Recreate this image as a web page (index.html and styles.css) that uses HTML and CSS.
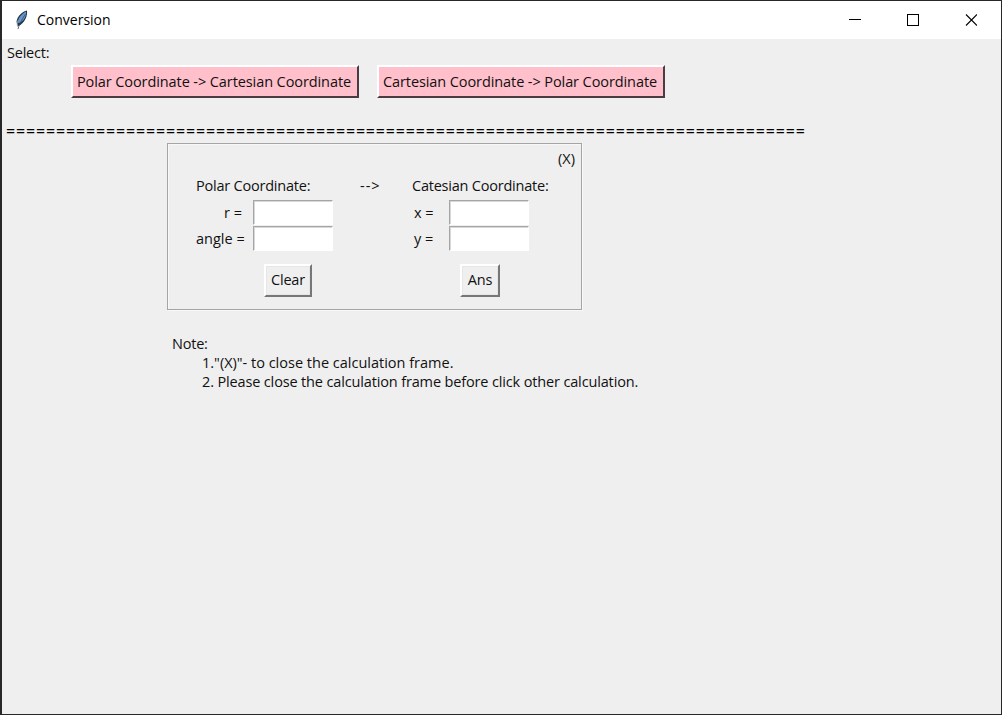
FILE: index.html
```html
<!DOCTYPE html>
<html lang="en">
<head>
<meta charset="utf-8">
<title>Conversion</title>
<link rel="stylesheet" href="styles.css">
</head>
<body>
<div class="window">
  <header class="titlebar">
    <svg class="feather" width="14" height="20" viewBox="0 0 14 20">
      <path d="M12 .5C7.500 1.500 2.500 6 1.500 11.500L2.500 16.500 6 14.500C10.500 11 12.500 5.500 12 .5Z" fill="#28323d"/>
      <path d="M11 1.500C6.500 4 3 8 2.500 13L5.500 12.500C9.500 9.500 11.500 6 11 1.500Z" fill="#6298d0"/>
      <path d="M10.500 4C8 8 5 12 3 19" fill="none" stroke="#34475d" stroke-width=".8"/>
      <path d="M2 10.500L2.300 16" fill="none" stroke="#b9c8d4" stroke-width=".8"/>
    </svg>
    <h1 class="title">Conversion</h1>
    <svg class="controls" width="128" height="14" viewBox="0 0 128 14" fill="none" stroke="#000">
      <path d="M0 6.500H12M58.500 1.500H69.500V12.500H58.500Z" shape-rendering="crispEdges"/>
      <path d="M117 1.500L128 12.500M128 1.500L117 12.500" stroke-width="1.100"/>
    </svg>
  </header>
  <main class="client">
    <div class="select">Select:</div>
    <div class="modes">
      <button class="button pink">Polar Coordinate -&gt; Cartesian Coordinate</button>
      <button class="button pink">Cartesian Coordinate -&gt; Polar Coordinate</button>
    </div>
    <div class="separator">================================================================================</div>
    <section class="frame">
      <div class="close">(X)</div>
      <div class="headings">
        <span class="from">Polar Coordinate:</span>
        <span class="arrow">--&gt;</span>
        <span class="to">Catesian Coordinate:</span>
      </div>
      <div class="fields">
        <label class="label-r" for="r">r =</label><input class="entry" id="r">
        <label class="label-xy" for="x">x =</label><input class="entry" id="x">
        <label class="label-angle" for="angle">angle =</label><input class="entry" id="angle">
        <label class="label-xy" for="y">y =</label><input class="entry" id="y">
      </div>
      <div class="actions">
        <button class="button clear">Clear</button>
        <button class="button ans">Ans</button>
      </div>
    </section>
    <div class="note">
      <div class="note-title">Note:</div>
      <div class="note-one">1."(X)"- to close the calculation frame.</div>
      <div class="note-two">2. Please close the calculation frame before click other calculation.</div>
    </div>
  </main>
</div>
</body>
</html>
```
FILE: styles.css
```css
* { box-sizing: border-box; }
body { margin: 0; font: 14.5px/19px "Open Sans", "Noto Sans", sans-serif; color: #111; white-space: nowrap; letter-spacing: -0.22px; }
.window { width: 1002px; height: 715px; border: 1px solid #28282a; border-left-width: 2px; background: #efefef; overflow: hidden; }
.titlebar { display: flex; align-items: center; height: 38px; padding-left: 13px; background: #fff; }
.title { margin: -2px 0 0 8px; font-size: 14px; font-weight: 400; color: #000; letter-spacing: 0; }
.controls { margin-left: auto; margin-right: 24px; }
.client { display: flex; flex-direction: column; align-items: flex-start; padding-top: 4px; }
.select { padding-left: 5px; }
.modes { display: flex; gap: 18px; margin: 3px 0 0 69px; }
.button { height: 33px; padding: 0 0 2px; border: 2px solid; border-color: #fff #777 #777 #fff; background: #efefef; color: #111; font: inherit; letter-spacing: inherit; text-align: center; box-shadow: inset 1px 1px #e6e6e6, inset -1px -1px #e6e6e6; }
.pink { width: 288px; padding: 0 2px 1px 0; background: #ffc0cb; border-color: #fff #493d43 #493d43 #fff; box-shadow: none; letter-spacing: -0.090px; }
.separator { margin: 24px 0 0 4px; font-size: 16px; letter-spacing: 0.848px; color: #000; }
.frame { width: 415px; height: 167px; margin: 2px 0 0 165px; border: 1px solid #a5a5a5; box-shadow: inset 1px 1px #f8f8f8, 1px 1px #f8f8f8; }
.close { height: 19px; margin: 5px 6px 0 0; text-align: right; letter-spacing: 0; }
.headings { display: grid; grid-template-columns: 164px 52px 1fr; height: 19px; margin: 8px 0 0 28px; }
.arrow { letter-spacing: 1px; }
.fields { display: grid; grid-template-columns: 85px 161px 35px 81px; row-gap: 1px; margin-top: 5px; align-items: center; letter-spacing: 0; }
.entry { width: 80px; height: 25px; padding: 0 2px; border: 1px solid; border-color: #a5a5a5 #fff #fff #a5a5a5; background: #fff; outline: 0; font: inherit; box-shadow: inset 1px 1px #d8d8d8; }
.label-r { padding-left: 56px; }
.label-angle { padding-left: 28px; }
.actions { display: flex; gap: 148px; margin: 13px 0 0 96px; }
.clear { width: 48px; }
.ans { width: 40px; }
.note { margin: 24px 0 0 170px; }
.note-one, .note-two { padding-left: 30px; }
.note-one { letter-spacing: 0; }
.note-two { letter-spacing: -0.145px; }
```
